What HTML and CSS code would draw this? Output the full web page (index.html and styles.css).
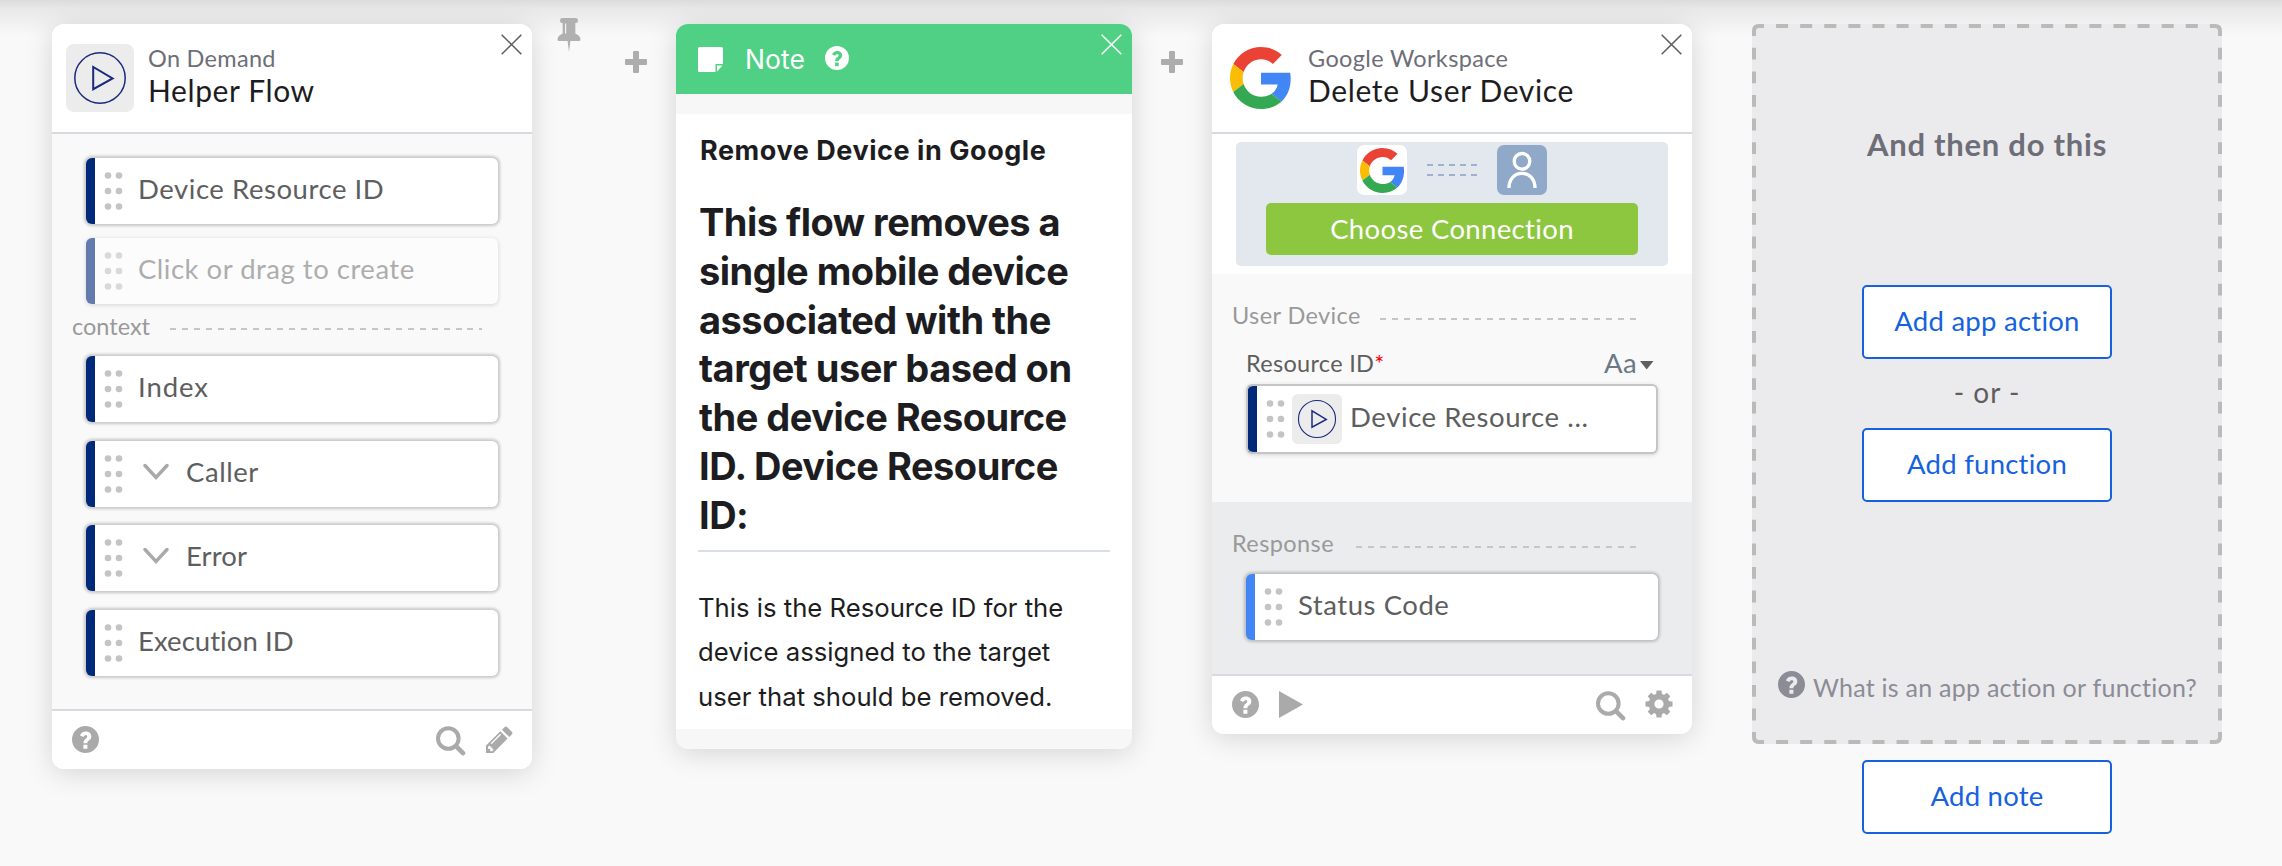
FILE: index.html
```html
<!DOCTYPE html>
<html lang="en">
<head>
<meta charset="utf-8">
<title>Flow editor</title>
<link rel="stylesheet" href="styles.css">
</head>
<body>
<svg class="defs" width="0" height="0" aria-hidden="true">
  <symbol id="google" viewBox="0 0 48 48">
    <path fill="#EA4335" d="M24 9.5c3.54 0 6.71 1.22 9.21 3.6l6.85-6.85C35.9 2.38 30.47 0 24 0 14.62 0 6.51 5.38 2.56 13.22l7.98 6.19C12.43 13.72 17.74 9.5 24 9.5z"/>
    <path fill="#4285F4" d="M46.98 24.55c0-1.57-.15-3.09-.38-4.55H24v9.02h12.94c-.58 2.96-2.26 5.48-4.78 7.18l7.73 6c4.51-4.18 7.09-10.36 7.09-17.65z"/>
    <path fill="#FBBC05" d="M10.53 28.59c-.48-1.45-.76-2.99-.76-4.59s.27-3.14.76-4.59l-7.98-6.19C.92 16.46 0 20.12 0 24c0 3.88.92 7.54 2.56 10.78l7.97-6.19z"/>
    <path fill="#34A853" d="M24 48c6.48 0 11.93-2.13 15.89-5.81l-7.73-6c-2.15 1.45-4.92 2.3-8.16 2.3-6.26 0-11.57-4.22-13.47-9.91l-7.98 6.19C6.51 42.62 14.62 48 24 48z"/>
  </symbol>
  <symbol id="flow" viewBox="0 0 68 68">
    <rect width="68" height="68" rx="8" fill="#ececec"/>
    <circle cx="34" cy="34" r="25.2" fill="none" stroke="#1a2a7c" stroke-width="1.5"/>
    <path d="M27.2 23v22.2L46.6 34.5z" fill="none" stroke="#1a2a7c" stroke-width="2"/>
  </symbol>
  <symbol id="help" viewBox="0 0 27 27">
    <path fill="currentColor" fill-rule="evenodd" d="M13.5 0a13.5 13.5 0 1 1 0 27a13.5 13.5 0 1 1 0-27zM8 9.6l3.4 1.5c.5-1.2 1.2-1.8 2.3-1.8 1 0 1.6.5 1.6 1.3 0 .9-.7 1.4-1.6 2.1-1.5 1.1-2.2 2-2.2 4v.5h3.9c0-1.300.5-1.800 1.600-2.600 1.400-1 2.300-2.200 2.300-4.100 0-3-2.300-4.900-5.500-4.900-2.900 0-4.900 1.400-5.800 4zM11.400 18.700v4h4v-4z"/>
  </symbol>
  <symbol id="dots" viewBox="0 0 20 40">
    <g fill="#c4c4c4"><circle cx="4" cy="4.500" r="3.300"/><circle cx="15" cy="4.500" r="3.300"/><circle cx="4" cy="20" r="3.300"/><circle cx="15" cy="20" r="3.300"/><circle cx="4" cy="35.500" r="3.300"/><circle cx="15" cy="35.500" r="3.300"/></g>
  </symbol>
  <symbol id="close" viewBox="0 0 22 22">
    <path d="M.7.700l20.600 20.600M21.300.7L.7 21.300" fill="none" stroke="currentColor" stroke-width="1.600"/>
  </symbol>
  <symbol id="search" viewBox="0 0 30 30">
    <circle cx="12.300" cy="12.500" r="10.300" fill="none" stroke="currentColor" stroke-width="4"/>
    <path d="M20.500 20.700l6.500 6.500" stroke="currentColor" stroke-width="4.600" stroke-linecap="round"/>
  </symbol>
  <symbol id="plus" viewBox="0 0 24 24">
    <path d="M10 1h4a1 1 0 0 1 1 1v7h7a1 1 0 0 1 1 1v4a1 1 0 0 1-1 1h-7v7a1 1 0 0 1-1 1h-4a1 1 0 0 1-1-1v-7H2a1 1 0 0 1-1-1v-4a1 1 0 0 1 1-1h7V2a1 1 0 0 1 1-1z" fill="#adadad"/>
  </symbol>
  <symbol id="chevron" viewBox="0 0 26 18">
    <path d="M2 2.500l11 12L24 2.500" fill="none" stroke="#a9a9a9" stroke-width="3.400" stroke-linecap="round"/>
  </symbol>
</svg>

<main class="canvas">
  <section class="card">
    <header class="card-head">
      <svg class="head-icon"><use href="#flow"/></svg>
      <div class="head-text"><p class="app app-demand">On Demand</p><h2 class="title">Helper Flow</h2></div>
      <svg class="close"><use href="#close"/></svg>
    </header>
    <div class="card-body">
      <div class="field"><svg class="dots"><use href="#dots"/></svg><span class="label">Device Resource ID</span></div>
      <div class="field field-new"><svg class="dots"><use href="#dots"/></svg><span class="label">Click or drag to create</span></div>
      <div class="divider divider-context"><span>context</span><i></i></div>
      <div class="field-list">
        <div class="field"><svg class="dots"><use href="#dots"/></svg><span class="label label-index">Index</span></div>
        <div class="field"><svg class="dots"><use href="#dots"/></svg><svg class="chevron"><use href="#chevron"/></svg><span class="label">Caller</span></div>
        <div class="field"><svg class="dots"><use href="#dots"/></svg><svg class="chevron"><use href="#chevron"/></svg><span class="label label-error">Error</span></div>
        <div class="field"><svg class="dots"><use href="#dots"/></svg><span class="label label-execution">Execution ID</span></div>
      </div>
    </div>
    <footer class="card-foot">
      <svg class="help"><use href="#help"/></svg>
      <svg class="search"><use href="#search"/></svg>
      <svg class="pencil" viewBox="0 0 28 28"><path fill="currentColor" fill-rule="evenodd" d="M1 19.500L15.300 5.200l7.300 7.300L8.300 27H1zM3 20.800v2l2 .2.200 2.200 2 .1 1.500-1.500-4.200-4.400zM6.600 18.200l9.500-9.500-.9-.9-9.500 9.500zM17 3.700l2.500-2.500q1.400-1.400 2.800 0l4.500 4.500q1.400 1.400 0 2.800L24.300 11z"/></svg>
    </footer>
  </section>

  <div class="gutter gutter-first">
    <svg class="pin" viewBox="0 0 24 35"><path fill="#b0b0b0" fill-rule="evenodd" d="M5 1h14q2 0 2 2.500T19 6h-.7v10.500Q23.500 18.500 23.500 22.500q0 1.500-1.500 1.500h-8.600L12 35l-1.400-11H2Q.5 24 .5 22.500.5 18.500 5.700 16.500V6H5Q3 6 3 3.500T5 1zM8 6.500v10h1.200v-10z"/></svg>
    <svg class="plus"><use href="#plus"/></svg>
  </div>

  <section class="card note">
    <header class="note-head">
      <svg class="note-icon" viewBox="0 0 25 25"><path fill="#fff" d="M1.500 0h22q1.500 0 1.500 1.500V17h-7.500V25h-16Q0 25 0 23.500v-22Q0 0 1.500 0zM19 18.500h5.500L19 24.500z"/></svg>
      <span class="note-name">Note</span>
      <svg class="note-help"><use href="#help"/></svg>
      <svg class="close"><use href="#close"/></svg>
    </header>
    <div class="note-body">
      <h3>Remove Device in Google</h3>
      <h1>This flow removes a<br>single mobile device<br>associated with the<br>target user based on<br>the device Resource<br>ID. Device Resource<br>ID:</h1>
      <p>This is the Resource ID for the<br>device assigned to the target<br>user that should be removed.</p>
    </div>
  </section>

  <div class="gutter"><svg class="plus"><use href="#plus"/></svg></div>

  <section class="card">
    <header class="card-head google-head">
      <svg class="head-google"><use href="#google"/></svg>
      <div class="head-text"><p class="app">Google Workspace</p><h2 class="title title-delete">Delete User Device</h2></div>
      <svg class="close"><use href="#close"/></svg>
    </header>
    <div class="connection">
      <div class="connection-box">
        <div class="link">
          <span class="tile"><svg class="tile-google"><use href="#google"/></svg></span>
          <span class="link-line"></span>
          <span class="tile tile-user"><svg viewBox="0 0 50 50"><g fill="none" stroke="#fff" stroke-width="3.300"><circle cx="25" cy="16.300" r="7.800"/><path d="M12 43c0-9 5.500-14.600 13-14.600S38 34 38 43"/></g></svg></span>
        </div>
        <button class="choose">Choose Connection</button>
      </div>
    </div>
    <div class="inputs">
      <div class="divider divider-device"><span>User Device</span><i></i></div>
      <div class="input-label"><span>Resource ID<b>*</b></span><span class="type">Aa<svg viewBox="0 0 14 9"><path d="M0 0h13.500L6.700 8.500z" fill="#5e5e5e"/></svg></span></div>
      <div class="field field-input"><svg class="dots"><use href="#dots"/></svg><svg class="field-flow"><use href="#flow"/></svg><span class="label label-wide">Device Resource ...</span></div>
    </div>
    <div class="response">
      <div class="divider divider-response"><span>Response</span><i></i></div>
      <div class="field field-blue"><svg class="dots"><use href="#dots"/></svg><span class="label">Status Code</span></div>
    </div>
    <footer class="card-foot google-foot">
      <svg class="help"><use href="#help"/></svg>
      <svg class="play" viewBox="0 0 24 27"><path d="M0 0l24 13.500L0 27z" fill="currentColor"/></svg>
      <svg class="search"><use href="#search"/></svg>
      <svg class="gear" viewBox="0 0 28 28"><g fill="currentColor"><path fill-rule="evenodd" d="M14 3.600a10.400 10.400 0 1 1 0 20.800a10.400 10.400 0 1 1 0-20.800zM14 9.400a4.600 4.600 0 1 0 0 9.200a4.600 4.600 0 1 0 0-9.200z"/><path d="M11.500.500h5l.6 5h-6.200zM11.500 27.500h5l.6-5h-6.200zM.5 11.500v5l5 .6v-6.200zM27.500 11.500v5l-5 .6v-6.200zM2.700 6.200L6.200 2.700l3.900 3-4.400 4.400zM25.300 6.200l-3.500-3.500-3.900 3 4.400 4.400zM2.700 21.800l3.500 3.500 3.900-3-4.400-4.400zM25.300 21.800l-3.500 3.500-3.900-3 4.400-4.400z"/></g></svg>
    </footer>
  </section>

  <section class="next">
    <div class="next-box">
      <svg class="dashes" viewBox="0 0 470 720"><g fill="none" stroke="#bababa" stroke-width="4">
        <path d="M12 2h446M12 718h446" stroke-dasharray="12.050" stroke-dashoffset="12.050"/>
        <path d="M2 12v696M468 12v696" stroke-dasharray="11.800" stroke-dashoffset="11.800"/>
        <path d="M2 12V7q0-5 5-5h5M458 2h5q5 0 5 5v5M468 708v5q0 5-5 5h-5M12 718H7q-5 0-5-5v-5"/>
      </g></svg>
      <h2>And then do this</h2>
      <button class="add">Add app action</button>
      <p class="or">- or -</p>
      <button class="add">Add function</button>
      <p class="what"><svg class="help"><use href="#help"/></svg><span>What is an app action or function?</span></p>
    </div>
    <button class="add add-note">Add note</button>
  </section>
</main>
</body>
</html>
```
FILE: styles.css
```css
* { box-sizing: border-box; }

body {
  margin: 0;
  background: #f9f9f9;
  font-family: Lato, "Liberation Sans", sans-serif;
  color: #1d1d21;
}

h1, h2, h3, p { margin: 0; font-weight: 400; }
svg { display: block; flex: none; }
button { font-family: inherit; margin: 0; display: block; }
.defs { position: absolute; }

.canvas {
  display: flex;
  align-items: flex-start;
  height: 866px;
  padding: 24px 0 0 52px;
  overflow: hidden;
  background: linear-gradient(#dcdcdc 0, #e8e8e8 8px, #eeeeee 18px, #f5f5f5 30px, #f9f9f9 38px) no-repeat 0 0 / 100% 38px;
}

/* Cards */
.card {
  width: 480px;
  flex: none;
  border-radius: 12px;
  background: #f9f9f9;
  box-shadow: 0 4px 28px rgba(0, 0, 0, .15);
}
.card-head {
  position: relative;
  display: flex;
  height: 110px;
  padding: 20px 0 0 14px;
  border-bottom: 2px solid #d8dadf;
  border-radius: 12px 12px 0 0;
  background: #fff;
}
.head-icon { width: 68px; height: 68px; margin-right: 14px; }
.head-google { width: 62px; height: 62px; margin: 3px 16px 0 4px; }
.app { font-size: 23.5px; line-height: 28px; letter-spacing: .35px; color: #6e6e78; }
.app-demand { letter-spacing: .3px; }
.title { font-size: 30px; line-height: 36px; letter-spacing: .6px; }
.title-delete { letter-spacing: .65px; }
.close {
  position: absolute;
  top: 10px;
  right: 10px;
  width: 21px;
  height: 21px;
  color: #5c5c5c;
}
.card-body { height: 575px; padding: 24px 34px 0; }
.card-foot {
  display: flex;
  align-items: flex-start;
  height: 60px;
  padding: 15px 20px 0;
  border-top: 2px solid #d8dadf;
  border-radius: 0 0 12px 12px;
  background: #fff;
  color: #aaa;
}
.help { width: 27px; height: 27px; }
.search { width: 30px; height: 30px; margin-left: auto; }
.pencil { width: 28px; height: 28px; margin: 0 -1px 0 19px; }
.google-foot .play { width: 24px; height: 27px; margin-left: 20px; }
.gear { width: 28px; height: 28px; margin: -1px -1px 0 19px; }

/* Fields */
.field {
  display: flex;
  align-items: center;
  width: 412px;
  height: 66px;
  padding-left: 9px;
  border-left: 9px solid #00297a;
  border-radius: 6px;
  background: #fff;
  box-shadow: 0 0 3px 2px rgba(0, 0, 0, .2);
}
.field-new { margin-top: 14px; opacity: .6; box-shadow: 0 1px 4px rgba(0, 0, 0, .25); }
.field-new .label { color: #7b7b7b; letter-spacing: .5px; }
.field-list { display: grid; gap: 18.5px; margin-top: 16px; }
.dots { width: 20px; height: 40px; }
.label {
  margin-left: 14px;
  padding-bottom: 4px;
  font-size: 27.5px;
  line-height: 34px;
  letter-spacing: .55px;
  color: #5e5e5e;
  white-space: nowrap;
}
.label-index { letter-spacing: .9px; }
.label-error { letter-spacing: .1px; }
.label-execution { letter-spacing: .05px; }
.chevron { width: 26px; height: 18px; margin: 0 3px 4px 19px; }
.field-input {
  margin-top: 7px;
  height: 70px;
  padding: 0 0 0 9px;
  border: 2px solid #c5c5c5;
  border-left: 0;
  background: linear-gradient(#00297a, #00297a) 2px 0 / 9px 100% no-repeat #fff;
  box-shadow: inset 2px 0 #c5c5c5, 0 1px 4px rgba(0, 0, 0, .15);
}
.field-input .dots { margin-left: 11px; }
.field-flow { width: 50px; height: 50px; margin-left: 6px; }
.field-input .label { margin-left: 8px; letter-spacing: .6px; }
.field-blue { margin-top: 17px; border-left-color: #4285f4; }

/* Section dividers */
.divider {
  display: flex;
  height: 28px;
  font-size: 23.5px;
  line-height: 28px;
  color: #999;
  white-space: nowrap;
}
.divider i {
  height: 2px;
  margin-top: 16px;
  background: repeating-linear-gradient(90deg, #c6c6c6 0 6px, transparent 6px 11.9px);
}
.divider span { flex: none; }
.divider-context { margin: 8px 0 0 -14px; }
.divider-context span { width: 98px; }
.divider-context i { width: 312px; }
.divider-device, .divider-response { margin-left: -14px; letter-spacing: .4px; }
.divider-device i, .divider-response i { margin-top: 17px; }
.divider-device span { width: 148px; }
.divider-device i { width: 262px; }
.divider-response span { width: 124px; }
.divider-response i { width: 286px; }

/* Connectors between the cards */
.gutter { display: flex; justify-content: center; width: 80px; flex: none; padding-top: 26px; }
.gutter-first { width: 144px; padding-top: 0; justify-content: flex-start; }
.pin { width: 24px; height: 35px; margin: -7px 43px 0 25px; }
.plus { width: 24px; height: 24px; }
.gutter-first .plus { margin-top: 26px; }

/* Note card */
.note { width: 456px; height: 725px; background: #f7f7f7; font-family: Inter, sans-serif; }
.note-head {
  position: relative;
  display: flex;
  align-items: center;
  height: 70px;
  padding-left: 22px;
  border-radius: 12px 12px 0 0;
  background: #4fd084;
  color: #fff;
}
.note-head .close { color: #fff; }
.note-icon { width: 25px; height: 25px; }
.note-name { width: 80px; margin-left: 22px; font-size: 26.5px; letter-spacing: .1px; }
.note-help { width: 24px; height: 24px; margin-top: -2px; }
.note-body { height: 615px; margin-top: 20px; padding: 20px 22px 0; background: #fff; }
.note-body h3 { padding-left: 2px; font-size: 27px; font-weight: 700; line-height: 34px; letter-spacing: .55px; }
.note-body h1 {
  height: 354px;
  margin-top: 30px;
  padding-left: 1px;
  border-bottom: 2px solid #d9dde4;
  font-size: 38px;
  font-weight: 700;
  line-height: 48.8px;
  letter-spacing: -.5px;
  white-space: nowrap;
}
.note-body p { margin-top: 34px; font-size: 25.7px; line-height: 44.4px; white-space: nowrap; }

/* Google Workspace card */
.connection { height: 140px; padding: 8px 24px 0; background: #fff; }
.connection-box { height: 124px; padding: 3px 30px 0; border-radius: 5px; background: #e3e8ef; }
.link { display: flex; justify-content: center; align-items: flex-start; gap: 20px; }
.tile {
  display: flex;
  justify-content: center;
  align-items: center;
  width: 50px;
  height: 50px;
  border-radius: 7px;
  background: #fff;
}
.tile-google { width: 45px; height: 45px; }
.tile-user { background: #90a9c9; }
.tile-user svg { width: 50px; height: 50px; }
.link-line {
  width: 50px;
  height: 12px;
  margin-top: 19px;
  background:
    linear-gradient(#e3e8ef, #e3e8ef) 0 50% / 100% 8px no-repeat,
    repeating-linear-gradient(90deg, #9fb1ce 0 6px, transparent 6px 11px);
}
.choose {
  width: 372px;
  height: 52px;
  margin-top: 8px;
  padding: 0 0 2px;
  border: 0;
  border-radius: 5px;
  background: #8dc63f;
  color: #fff;
  font-size: 27.5px;
  letter-spacing: .35px;
}
.inputs { height: 228px; padding: 27px 34px 0; }
.input-label {
  display: flex;
  justify-content: space-between;
  width: 408px;
  margin-top: 20px;
  font-size: 23.5px;
  line-height: 28px;
  letter-spacing: .3px;
  color: #5e5e5e;
}
.input-label b { color: #f00; font-weight: 400; }
.type { display: flex; font-size: 27.5px; color: #6b7885; }
.type svg { width: 14px; height: 9px; margin: 12px 0 0 3px; }
.response { height: 172px; padding: 27px 34px 0; background: #ebecee; }

/* Next step placeholder */
.next { width: 470px; margin-left: 60px; flex: none; }
.next-box {
  position: relative;
  height: 720px;
  padding-top: 100px;
  border-radius: 6px;
  background: #ebebed;
}
.dashes { position: absolute; inset: 0; width: 470px; height: 720px; }
.next h2 {
  font-size: 31px;
  font-weight: 700;
  line-height: 40px;
  letter-spacing: .75px;
  text-align: center;
  color: #6e6e78;
}
.add {
  width: 250px;
  height: 74px;
  margin: 0 auto;
  padding: 0 0 3px;
  border: 2px solid #1662dd;
  border-radius: 5px;
  background: #fff;
  color: #1662dd;
  font-size: 27.5px;
  letter-spacing: .25px;
}
.next h2 + .add { margin-top: 121px; }
.or {
  margin: 15px 0 18px;
  font-size: 28px;
  line-height: 36px;
  letter-spacing: 1px;
  text-align: center;
  color: #5e5e5e;
}
.what {
  display: flex;
  gap: 8px;
  margin: 169px 0 0 26px;
  font-size: 25px;
  line-height: 30px;
  letter-spacing: .25px;
  color: #8c8c96;
  white-space: nowrap;
}
.what span { padding-top: 1px; }
.add-note { margin-top: 16px; }
```
